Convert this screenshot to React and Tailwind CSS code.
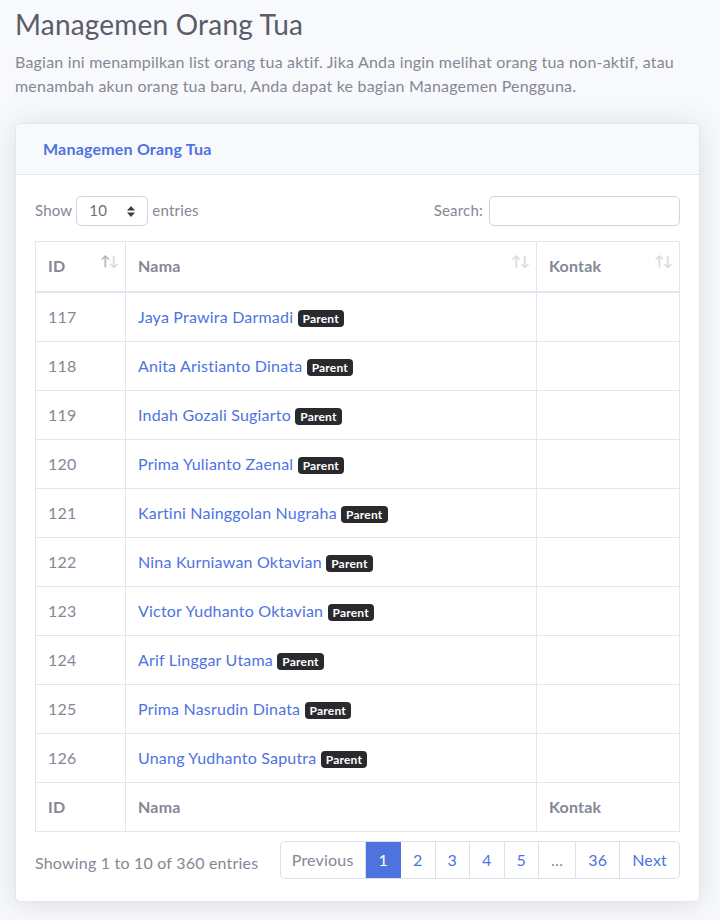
const rows = [
  [117, "Jaya Prawira Darmadi"],
  [118, "Anita Aristianto Dinata"],
  [119, "Indah Gozali Sugiarto"],
  [120, "Prima Yulianto Zaenal"],
  [121, "Kartini Nainggolan Nugraha"],
  [122, "Nina Kurniawan Oktavian"],
  [123, "Victor Yudhanto Oktavian"],
  [124, "Arif Linggar Utama"],
  [125, "Prima Nasrudin Dinata"],
  [126, "Unang Yudhanto Saputra"],
];

function SortIcon({ active }) {
  return (
    <span className="absolute right-[8px] top-[12px] text-[14px] leading-none tracking-[-2px] text-[#858796]">
      <span className={active ? "opacity-60" : "opacity-30"}>↑</span>
      <span className="opacity-30">↓</span>
    </span>
  );
}

const pages = ["1", "2", "3", "4", "5", "…", "36"];

export default function App() {
  return (
    <div
      className="min-h-[920px] bg-[#f8f9fc] pl-[15px] pr-[20px] pt-[8px] tracking-[0.2px] text-[#858796]"
      style={{ fontFamily: "Lato, 'Noto Sans', sans-serif" }}
    >
      <h1 className="mb-[8px] text-[28px] leading-[1.2] font-normal text-[#5a5c69]">
        Managemen Orang Tua
      </h1>
      <p className="mb-[25px] text-[16px] leading-[24px]">
        Bagian ini menampilkan list orang tua aktif. Jika Anda ingin melihat orang tua non-aktif, atau
        menambah akun orang tua baru, Anda dapat ke bagian Managemen Pengguna.
      </p>

      <div className="rounded-[5px] border border-[#e3e6f0] bg-white shadow-[0_2px_28px_0_rgba(58,59,69,0.15)]">
        <div className="rounded-t-[5px] border-b border-[#e3e6f0] bg-[#f8f9fc] px-[27px] py-[13px]">
          <h6 className="text-[16px] leading-[24px] font-bold text-[#4e73df]">Managemen Orang Tua</h6>
        </div>

        <div className="px-[19px] pt-[21px] pb-[22px]">
          <div className="flex items-center justify-between">
            <label className="flex items-center gap-[4px] text-[15px]">
              Show
              <span className="relative flex h-[30px] w-[72px] items-center rounded-[5px] border border-[#d1d3e2] pl-[12px] text-[15px] text-[#6e707e]">
                10
                <svg className="absolute right-[12px] top-[9px]" width="8" height="11" viewBox="0 0 8 11">
                  <path d="M4 0 L8 4.5 H0 Z M0 6.5 H8 L4 11 Z" fill="#3a3b45" />
                </svg>
              </span>
              entries
            </label>
            <label className="flex items-center gap-[6px] text-[15px]">
              Search:
              <span className="block h-[30px] w-[191px] rounded-[5px] border border-[#d1d3e2] bg-white" />
            </label>
          </div>

          <table className="mt-[15px] w-full border-collapse border border-[#e3e6f0] text-[16px] leading-[24px]">
            <colgroup>
              <col className="w-[90px]" />
              <col />
              <col className="w-[143px]" />
            </colgroup>
            <thead>
              <tr className="border-b-2 border-[#e3e6f0]">
                <th className="relative border border-[#e3e6f0] px-[12px] pt-[12px] pb-[13px] text-left font-bold">
                  ID
                  <SortIcon active />
                </th>
                <th className="relative border border-[#e3e6f0] px-[12px] pt-[12px] pb-[13px] text-left font-bold">
                  Nama
                  <SortIcon />
                </th>
                <th className="relative border border-[#e3e6f0] px-[12px] pt-[12px] pb-[13px] text-left font-bold">
                  Kontak
                  <SortIcon />
                </th>
              </tr>
            </thead>
            <tbody>
              {rows.map(([id, name]) => (
                <tr key={id}>
                  <td className="border border-[#e3e6f0] px-[12px] py-[12px]">{id}</td>
                  <td className="border border-[#e3e6f0] px-[12px] py-[12px]">
                    <span className="text-[#4e73df]">{name}</span>{" "}
                    <span className="inline-block rounded-[4px] bg-[#2a2a2e] px-[5px] align-middle text-[12px] leading-[17px] font-bold text-white">
                      Parent
                    </span>
                  </td>
                  <td className="border border-[#e3e6f0] px-[12px] py-[12px]"></td>
                </tr>
              ))}
            </tbody>
            <tfoot>
              <tr>
                <th className="border border-[#e3e6f0] px-[12px] py-[12px] text-left font-bold">ID</th>
                <th className="border border-[#e3e6f0] px-[12px] py-[12px] text-left font-bold">Nama</th>
                <th className="border border-[#e3e6f0] px-[12px] py-[12px] text-left font-bold">Kontak</th>
              </tr>
            </tfoot>
          </table>

          <div className="mt-[9px] flex items-center justify-between">
            <div className="pt-[6px] text-[16px]">Showing 1 to 10 of 360 entries</div>
            <div className="flex h-[38px] overflow-hidden rounded-[5px] border border-[#dddfeb] text-[16px]">
              <span className="flex items-center border-r border-[#dddfeb] px-[11px] text-[#858796]">Previous</span>
              {pages.map((p) => (
                <span
                  key={p}
                  className={
                    p === "1"
                      ? "flex items-center bg-[#4e73df] px-[13px] text-white"
                      : p === "…"
                      ? "flex items-center border-r border-[#dddfeb] px-[12px] text-[#858796]"
                      : "flex items-center border-r border-[#dddfeb] px-[12px] text-[#4e73df]"
                  }
                >
                  {p}
                </span>
              ))}
              <span className="flex items-center px-[12px] text-[#4e73df]">Next</span>
            </div>
          </div>
        </div>
      </div>
    </div>
  );
}
